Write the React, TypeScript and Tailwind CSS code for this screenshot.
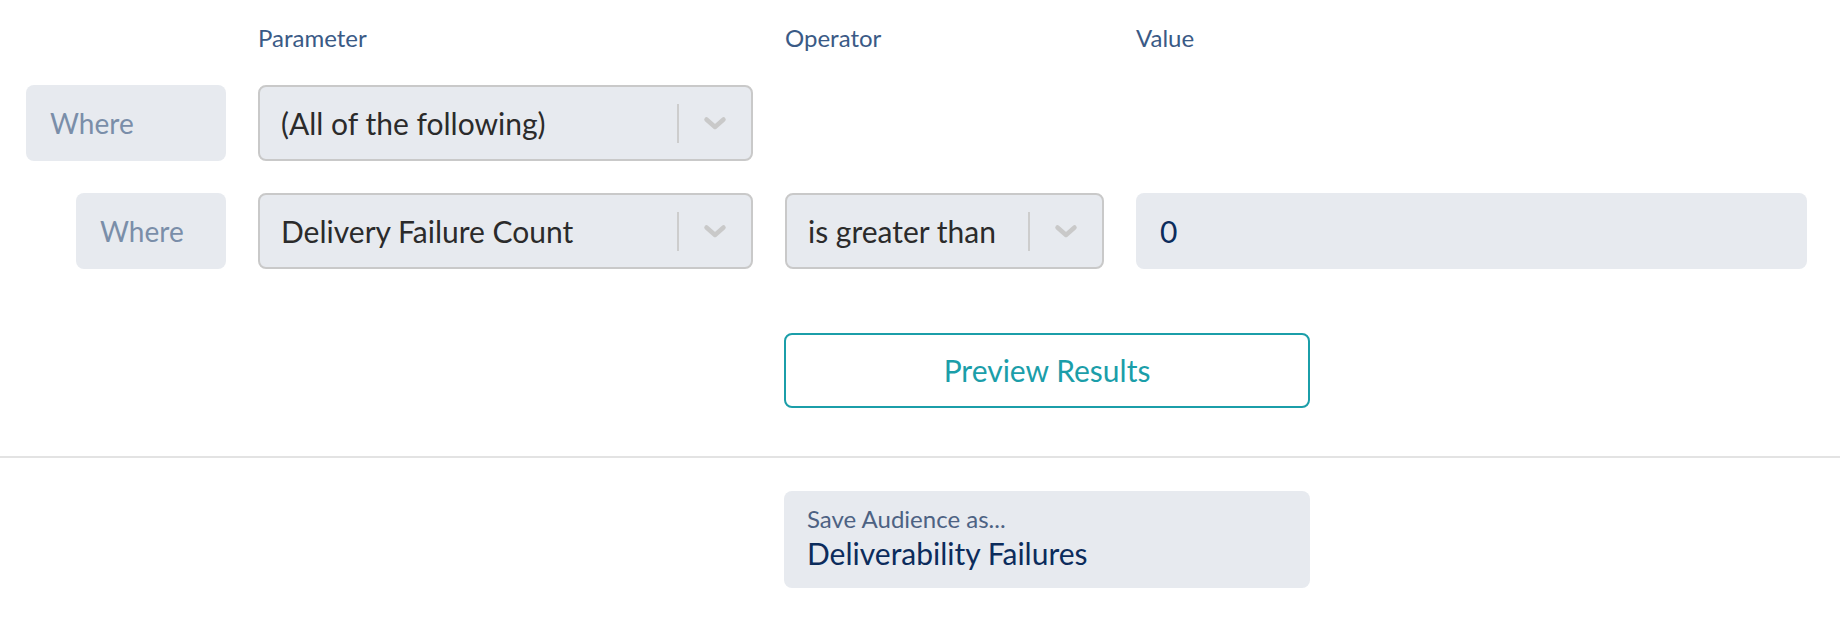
import React from "react";

function Chevron({ color = "#c9c9c9" }: { color?: string }) {
  return (
    <svg width="24" height="15" viewBox="0 0 24 15" fill="none">
      <polyline
        points="3.5,3.5 12,11 20.5,3.5"
        stroke={color}
        strokeWidth="4.5"
        strokeLinecap="round"
        strokeLinejoin="round"
      />
    </svg>
  );
}

function Select({ text, className = "" }: { text: string; className?: string }) {
  return (
    <div
      className={`h-[76px] flex items-center rounded-[8px] border-2 border-[#c9c9c9] bg-[#e7eaef] ${className}`}
    >
      <div className="flex-1 pl-[21px] text-[30px] text-[#2b2b2b] whitespace-nowrap overflow-hidden">
        {text}
      </div>
      <div className="w-[2px] h-[39px] bg-[#cdcdcd]" />
      <div className="w-[72px] flex items-center justify-center">
        <Chevron />
      </div>
    </div>
  );
}

function Where({ className = "" }: { className?: string }) {
  return (
    <div
      className={`h-[76px] flex items-center rounded-[8px] bg-[#e7eaef] pl-[24px] text-[28px] text-[#7a8ea9] ${className}`}
    >
      Where
    </div>
  );
}

export default function App() {
  return (
    <div className="w-[1840px] h-[628px] bg-white overflow-hidden font-['Lato',sans-serif]">
      <div className="pt-[23px] pl-[26px]">
        <div className="grid grid-cols-[200px_495px_319px_671px] gap-x-[32px]">
          <div />
          <div className="text-[24px] leading-[30px] text-[#3a5a86]">Parameter</div>
          <div className="text-[24px] leading-[30px] text-[#3a5a86]">Operator</div>
          <div className="text-[24px] leading-[30px] text-[#3a5a86]">Value</div>
        </div>

        <div className="grid grid-cols-[200px_495px_319px_671px] gap-x-[32px] mt-[32px]">
          <Where />
          <Select text="(All of the following)" />
          <div />
          <div />
        </div>

        <div className="grid grid-cols-[200px_495px_319px_671px] gap-x-[32px] mt-[32px]">
          <div className="flex justify-end">
            <Where className="w-[150px]" />
          </div>
          <Select text="Delivery Failure Count" />
          <Select text="is greater than" />
          <div className="h-[76px] flex items-center rounded-[8px] bg-[#e7eaef] pl-[24px] text-[30px] text-[#0c2c5c]">
            0
          </div>
        </div>

        <div className="grid grid-cols-[200px_495px_319px_671px] gap-x-[32px] mt-[64px]">
          <div />
          <div />
          <div className="col-span-2 -ml-[1px]">
            <button className="w-[526px] h-[75px] rounded-[8px] border-2 border-[#1b9ea9] bg-white text-[30px] text-[#1b9ea9] flex items-center justify-center">
              Preview Results
            </button>
          </div>
        </div>
      </div>

      <div className="mt-[48px] h-[2px] bg-[#e3e3e3]" />

      <div className="pl-[784px] mt-[33px]">
        <div className="w-[526px] h-[97px] rounded-[8px] bg-[#e7eaef] pl-[23px] pt-[13px]">
          <div className="text-[24px] leading-[30px] text-[#4d6283]">Save Audience as...</div>
          <div className="text-[30px] leading-[36px] mt-[1px] text-[#0c2c5c]">Deliverability Failures</div>
        </div>
      </div>
    </div>
  );
}
